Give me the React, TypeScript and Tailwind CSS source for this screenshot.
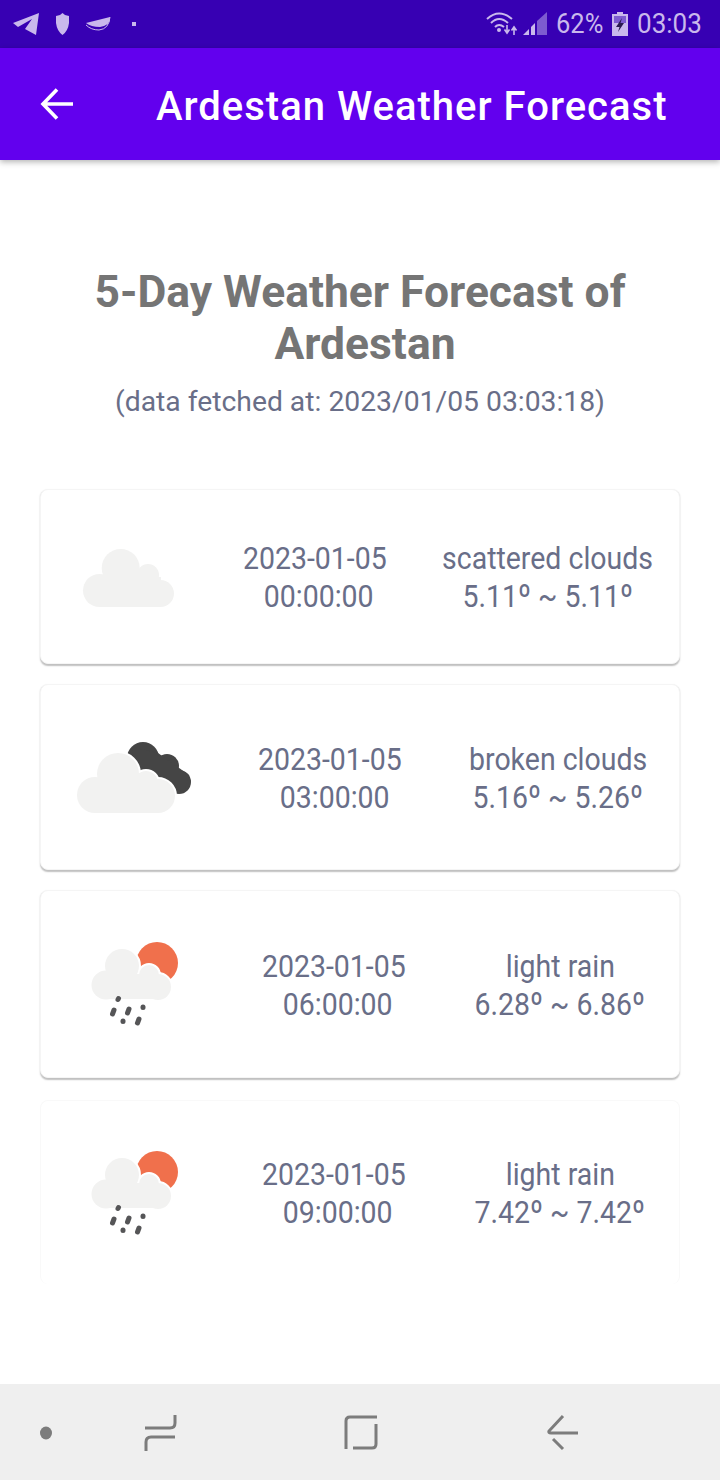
import React from 'react';

const CloudShape = ({ c, fill = '#f2f2f1', stroke }: { c: number[][]; fill?: string; stroke?: string }) => (
  <g fill={fill} stroke={stroke} strokeWidth={stroke ? 4 : 0}>
    {c.map(([x, y, r], i) => (
      <circle key={i} cx={x} cy={y} r={r} />
    ))}
  </g>
);

const ScatteredIcon = () => (
  <svg width="120" height="120" viewBox="0 0 120 120">
    <CloudShape c={[[51.7, 51, 19], [79, 58, 11], [30.5, 73.5, 16.5], [91.5, 76.5, 13.5]]} />
    <rect x="30" y="60" width="62" height="30" fill="#f2f2f1" />
  </svg>
);

const BrokenIcon = () => (
  <svg width="120" height="120" viewBox="0 0 120 120">
    <g fill="#454545">
      <circle cx="69" cy="41" r="16" />
      <circle cx="93" cy="49" r="12" />
      <circle cx="105" cy="65" r="12" />
      <path d="M58 30 L84 36 L115 58 L110 76 L60 50 Z" />
    </g>
    <CloudShape c={[[44, 57, 21], [72, 66, 12], [21, 78, 18], [84, 79, 17]]} fill="#ffffff" stroke="#ffffff" />
    <CloudShape c={[[44, 57, 21], [72, 66, 12], [21, 78, 18], [84, 79, 17]]} />
    <rect x="21" y="62" width="63" height="34" fill="#f2f2f1" />
  </svg>
);

const RainIcon = () => (
  <svg width="120" height="120" viewBox="0 0 120 120">
    <circle cx="82" cy="39" r="21" fill="#f0704c" />
    <CloudShape c={[[47, 42, 17], [74, 51, 10], [31, 61, 14.5], [83, 63, 13]]} fill="#ffffff" stroke="#ffffff" />
    <CloudShape c={[[47, 42, 17], [74, 51, 10], [31, 61, 14.5], [83, 63, 13]]} />
    <rect x="31" y="50" width="52" height="25" fill="#f2f2f1" />
    <g stroke="#555557" strokeWidth="5" strokeLinecap="round">
      <path d="M43.5 74.5 L43 75.5" />
      <path d="M39 86 L37.5 90" />
      <path d="M54 85 L52.5 89" />
      <path d="M68 83 L68 83.5" />
      <path d="M48 97 L48 97.5" />
      <path d="M64 95 L62.5 99" />
    </g>
  </svg>
);

const forecasts = [
  { id: 1, height: 'h-[175px]', icon: <ScatteredIcon />, time: '00:00:00', desc: 'scattered clouds', temp: '5.11º ~ 5.11º' },
  { id: 2, height: 'h-[186px]', icon: <BrokenIcon />, time: '03:00:00', desc: 'broken clouds', temp: '5.16º ~ 5.26º' },
  { id: 3, height: 'h-[188px]', icon: <RainIcon />, time: '06:00:00', desc: 'light rain', temp: '6.28º ~ 6.86º' },
  { id: 4, height: 'h-[184px]', icon: <RainIcon />, time: '09:00:00', desc: 'light rain', temp: '7.42º ~ 7.42º' },
];

const StatusBar = () => (
  <div className="h-12 bg-[#3700b3] flex items-center justify-between pl-[13px] pr-[18px] text-[#c9b8ec]">
    <div className="flex items-center">
      <svg width="26" height="24" viewBox="0 0 26 24" fill="#c9b8ec">
        <path d="M0 11 L26 1 L23 23 L12 17 L19 7 L5 15 Z" />
      </svg>
      <svg className="ml-[16px]" width="15" height="22" viewBox="0 0 15 22" fill="#c9b8ec">
        <path d="M7.5 0 L10 2 L14 3 L14 10 Q13 18 7.5 22 Q2 18 1 10 L1 3 L5 2 Z" />
      </svg>
      <svg className="ml-[15px]" width="26" height="16" viewBox="0 0 26 16">
        <path d="M1 7 L25 1 Q26 9 15 11 Q6 11 1 7 Z" fill="#c9b8ec" />
        <path d="M1 9 Q6 14 14 14 Q24 13 25 1" fill="none" stroke="#c9b8ec" strokeWidth="1" />
      </svg>
      <div className="ml-[21px] w-1 h-1 bg-[#c9b8ec]" />
    </div>
    <div className="flex items-center">
      <svg width="32" height="26" viewBox="0 0 32 26" fill="none" stroke="#c9b8ec" strokeWidth="2">
        <path d="M1 8 Q13 -3 26 8" />
        <path d="M5 12 Q13 4 22 12" />
        <path d="M9 16 Q13 12 18 16" />
        <circle cx="13" cy="19" r="1" fill="#c9b8ec" />
        <path d="M21 14 V21 M18.5 18.5 L21 22 L23.5 18.5 M28 24 V17 M25.5 19.5 L28 16 L30.5 19.5" strokeWidth="1.6" />
      </svg>
      <svg className="ml-[4px]" width="26" height="24" viewBox="0 0 26 24">
        <path d="M1 23 L7 17 V23 Z" fill="#c9b8ec" />
        <path d="M9 23 V15 L13 11 V23 Z" fill="#c9b8ec" />
        <path d="M15 23 V9 L25 0 V23 Z" fill="#7d5bd0" />
      </svg>
      <span className="ml-[8px] text-[28px] leading-none w-[47px] whitespace-nowrap inline-block origin-left scale-x-[0.91] font-['Roboto',sans-serif]">62%</span>
      <svg className="ml-[9px]" width="16" height="24" viewBox="0 0 16 24">
        <path d="M5 0 H11 V2 H16 V24 H0 V2 H5 Z" fill="#c9b8ec" />
        <rect x="2" y="4" width="12" height="7" fill="#7d5bd0" />
        <path d="M10 6 L4 15 H7.5 L6 20 L12 11 H8.5 Z" fill="#2a1a50" />
      </svg>
      <span className="ml-[9px] text-[28px] leading-none w-[65px] whitespace-nowrap inline-block origin-left scale-x-[0.93] font-['Roboto',sans-serif]">03:03</span>
    </div>
  </div>
);

const NavBar = () => (
  <div className="h-24 bg-[#efefef] flex items-center">
    <svg width="720" height="96" viewBox="0 0 720 96" fill="none" stroke="#7c7c7c" strokeWidth="3">
      <ellipse cx="46" cy="49" rx="6" ry="6.5" fill="#7c7c7c" stroke="none" />
      <path d="M145 44 H170 Q175 44 175 39 V31" />
      <path d="M146 67 V58 Q146 53 151 53 H175" />
      <path d="M346 65 V37 Q346 33 350 33 H377" />
      <path d="M376 40 V60 Q376 64 372 64 H353" />
      <path d="M563 32 L549 47 Q548 49 551 49 H578" />
      <path d="M553 55 L563 65" />
    </svg>
  </div>
);

const App = () => {
  return (
    <div className="w-[720px] h-[1480px] bg-white flex flex-col font-['Roboto',sans-serif] overflow-hidden">
      <StatusBar />
      <div className="h-[112px] bg-[#6200ee] flex items-center pl-10 shadow-[0_2px_6px_rgba(0,0,0,0.3)] relative">
        <svg width="34" height="34" viewBox="0 0 34 34" fill="none" stroke="#ffffff" strokeWidth="3.6" className="mb-[1px]">
          <path d="M33 17 H4 M17 2.5 L3 17 L17 31.5" />
        </svg>
        <h1 className="ml-[82px] mt-[5px] text-white text-[40px] font-medium tracking-[1px] whitespace-nowrap">Ardestan Weather Forecast</h1>
      </div>

      <div className="flex-1 px-10">
        <div className="pt-[106px] text-center">
          <h2 className="text-[44.4px] leading-[52px] font-bold text-[#757575]">
            5-Day Weather Forecast of<br />
            <span className="pl-[10px]">Ardestan</span>
          </h2>
          <p className="mt-[13px] text-[28.3px] leading-[38px] text-[#696e88]">(data fetched at: 2023/01/05 03:03:18)</p>
        </div>

        <div className="mt-[68px] flex flex-col">
          {forecasts.map((item, index) => (
            <div
              key={item.id}
              className={`${item.height} ${index === 3 ? 'border-b-0 border-[#f9f9f9]' : 'border-[#f5f5f5] shadow-[0_1.5px_1.5px_rgba(0,0,0,0.25)]'} ${index === 2 ? 'mb-[22px]' : index === 3 ? '' : 'mb-5'} bg-white rounded-lg border flex items-center justify-around`}
            >
              <div className="w-[120px] h-[120px] flex items-center justify-center">{item.icon}</div>
              <div className="text-[32px] leading-[38px] text-[#696e88] w-[144px] flex flex-col items-center mt-[1px]">
                <span className="mr-[3px] scale-x-[0.89] whitespace-nowrap">2023-01-05</span>
                <span className="ml-[6px] scale-x-[0.89] whitespace-nowrap">{item.time}</span>
              </div>
              <div className={`text-[32px] leading-[38px] text-[#696e88] flex flex-col items-center mt-[1px] ${item.id === 1 ? 'w-[208px]' : item.id === 2 ? 'w-[177px]' : 'w-[170px]'}`}>
                <span className="scale-x-[0.89] whitespace-nowrap">{item.desc}</span>
                <span className="scale-x-[0.89] whitespace-nowrap">{item.temp}</span>
              </div>
            </div>
          ))}
        </div>
      </div>

      <NavBar />
    </div>
  );
};

export default App;
